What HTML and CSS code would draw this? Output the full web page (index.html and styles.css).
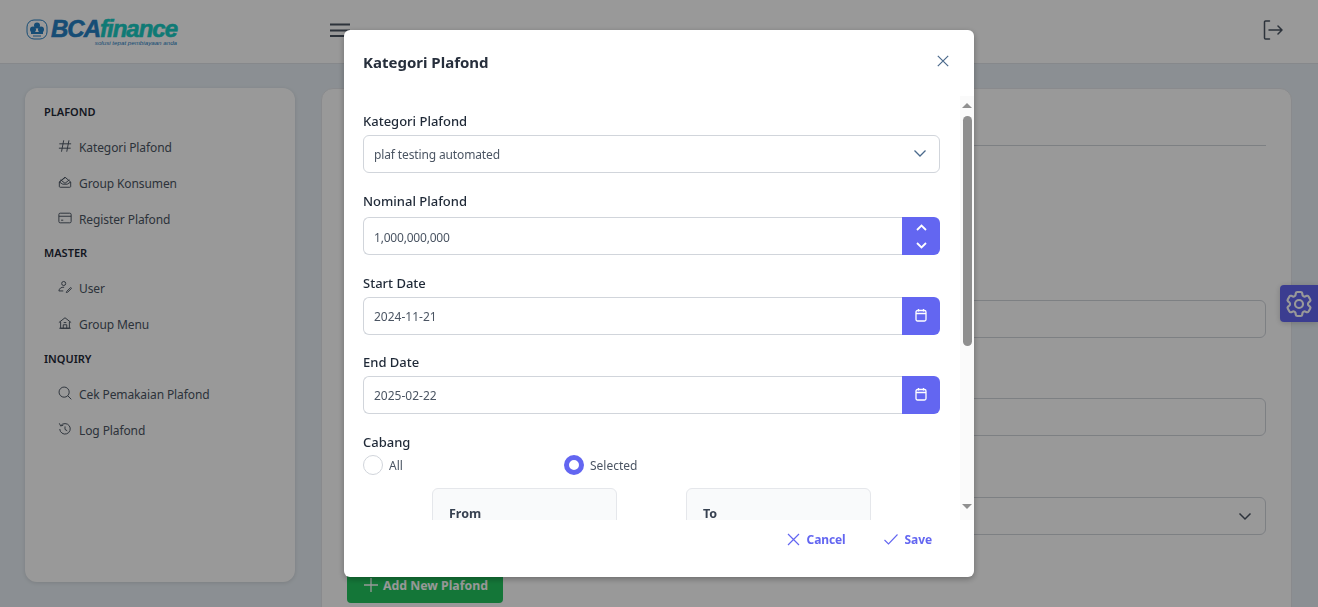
FILE: index.html
```html
<!DOCTYPE html>
<html>
<head>
    <title>Kategori Plafond</title>
    <link rel="stylesheet" href="styles.css">
</head>
<body>
    <!-- Page behind the dialog -->
    <header class="topbar">
        <div class="logo">
            <svg class="logo-mark" width="22" height="21" viewBox="0 0 22 21">
                <rect x="1" y="1" width="20" height="19" rx="7" fill="none" stroke="#2680c4" stroke-width="1"/>
                <circle cx="11" cy="6.5" r="3" fill="#2680c4"/>
                <circle cx="7" cy="10.5" r="3" fill="#2680c4"/>
                <circle cx="15" cy="10.5" r="3" fill="#2680c4"/>
                <path d="M5 13h12v2H5z" fill="#2680c4"/>
                <path d="M7 17h8" stroke="#2680c4"/>
            </svg>
            <div class="logo-words">
                <div class="logo-name"><span class="logo-bca">BCA</span><span class="logo-finance">finance</span></div>
                <div class="logo-tag">solusi tepat pembiayaan anda</div>
            </div>
        </div>
        <button class="icon-btn menu-btn">
            <svg width="20" height="17" viewBox="0 0 20 17" fill="none" stroke="#4b5563" stroke-width="2"><path d="M0 2.500h20M0 8.500h20M0 14h20"/></svg>
        </button>
        <button class="icon-btn logout-btn">
            <svg width="22" height="22" viewBox="0 0 22 22" fill="none" stroke="#4b5563" stroke-width="1.5" stroke-linecap="round" stroke-linejoin="round"><path d="M7.5 2H3.5a1 1 0 0 0-1 1v16a1 1 0 0 0 1 1h4M7 11h13M16 7l4 4-4 4"/></svg>
        </button>
    </header>

    <div class="page">
        <aside class="sidebar">
            <h4 class="side-title">PLAFOND</h4>
            <a class="side-link">
                <svg viewBox="0 0 16 16"><path d="M6.5 1.5 4 14.5M12.5 1.5 10 14.5M1.5 5.5h13.5M1 10.5h13.5"/></svg>
                Kategori Plafond
            </a>
            <a class="side-link">
                <svg viewBox="0 0 16 16"><path d="M1.500 8v5a1 1 0 0 0 1 1h11a1 1 0 0 0 1-1V8L8 2.500zM1.500 8 8 3M1.500 8l4 2.500h5l4-2.500M3 5.500 8 9.500l5-4"/></svg>
                Group Konsumen
            </a>
            <a class="side-link">
                <svg viewBox="0 0 16 16"><rect x="1" y="2.500" width="14" height="11" rx="1.500"/><path d="M1 6h14M3.500 10.500h2.500"/></svg>
                Register Plafond
            </a>
            <h4 class="side-title master">MASTER</h4>
            <a class="side-link">
                <svg viewBox="0 0 16 16"><circle cx="6.500" cy="4" r="2.300"/><path d="M1 12.500c.5-3 2.500-4.500 6-4.200M1 12.500h5M10 13l4.500-4.500 1 1L11 14l-1.500.3z"/></svg>
                User
            </a>
            <a class="side-link">
                <svg viewBox="0 0 16 16"><path d="M1 7.500 8 2l7 5.500M3 6.500v7.500h10V6.500M1.500 14h13M6 14v-4h4v4"/><path d="M6.500 7.500h3"/></svg>
                Group Menu
            </a>
            <h4 class="side-title inquiry">INQUIRY</h4>
            <a class="side-link">
                <svg viewBox="0 0 16 16"><circle cx="7" cy="7" r="5.800"/><path d="m11.200 11.200 4 4"/></svg>
                Cek Pemakaian Plafond
            </a>
            <a class="side-link">
                <svg viewBox="0 0 16 16"><path d="M3.200 4.200A6 6 0 1 1 2 8M1.500 1.500l1.500 3 3-.8M8 5v3.500l2.500 1.500"/></svg>
                Log Plafond
            </a>
        </aside>

        <main class="content">
            <div class="content-head"></div>
            <div class="back-input first"></div>
            <div class="back-input second"></div>
            <div class="back-input third">
                <svg width="14" height="14" viewBox="0 0 14 14" fill="none" stroke="#4b5563" stroke-width="1.500"><path d="m1.500 4.500 5.500 5.500 5.500-5.500"/></svg>
            </div>
            <button class="add-btn">
                <svg width="14" height="14" viewBox="0 0 14 14" fill="none" stroke="#fff" stroke-width="1.300"><path d="M7 0v14M0 7h14"/></svg>
                Add New Plafond
            </button>
        </main>
    </div>

    <button class="settings-tab">
        <svg width="32" height="32" viewBox="0 0 24 24" fill="none" stroke="#fff" stroke-width="1.600" stroke-linecap="round" stroke-linejoin="round"><path d="M9.594 3.940c.09-.542.56-.94 1.110-.94h2.593c.55 0 1.020.398 1.110.94l.213 1.281c.063.374.313.686.645.870.074.040.147.083.220.127.325.196.72.257 1.075.124l1.217-.456a1.125 1.125 0 0 1 1.370.490l1.296 2.247a1.125 1.125 0 0 1-.26 1.431l-1.003.827c-.293.241-.438.613-.43.992a7.723 7.723 0 0 1 0 .255c-.008.378.137.75.43.991l1.004.827c.424.35.534.955.26 1.430l-1.298 2.247a1.125 1.125 0 0 1-1.369.491l-1.217-.456c-.355-.133-.75-.072-1.076.124a6.470 6.470 0 0 1-.22.128c-.331.183-.581.495-.644.869l-.213 1.281c-.09.543-.56.94-1.110.94h-2.594c-.55 0-1.019-.398-1.110-.94l-.213-1.281c-.062-.374-.312-.686-.644-.87a6.520 6.520 0 0 1-.22-.127c-.325-.196-.72-.257-1.076-.124l-1.217.456a1.125 1.125 0 0 1-1.369-.49l-1.297-2.247a1.125 1.125 0 0 1 .26-1.431l1.004-.827c.292-.24.437-.613.43-.991a6.932 6.932 0 0 1 0-.255c.007-.38-.138-.751-.43-.992l-1.004-.827a1.125 1.125 0 0 1-.26-1.430l1.297-2.247a1.125 1.125 0 0 1 1.370-.491l1.216.456c.356.133.751.072 1.076-.124.072-.044.146-.086.22-.128.332-.183.582-.495.644-.869l.214-1.280Z"/><circle cx="12" cy="12" r="3"/></svg>
    </button>

    <!-- Dialog -->
    <div class="overlay">
        <div class="modal">
            <div class="modal-head">
                <h3 class="modal-title">Kategori Plafond</h3>
                <button class="icon-btn close-btn">
                    <svg width="12" height="12" viewBox="0 0 12 12" fill="none" stroke="#4b6a8c" stroke-width="1.200"><path d="m.8.800 10.400 10.400M11.200.800.800 11.200"/></svg>
                </button>
            </div>

            <div class="modal-body">
                <form class="modal-form">
                    <div class="field">
                        <label>Kategori Plafond</label>
                        <div class="select-box">
                            plaf testing automated
                            <svg class="caret" width="14" height="14" viewBox="0 0 14 14" fill="none" stroke="#4b6a8c" stroke-width="1.300"><path d="m1.500 4.500 5.500 5.500 5.500-5.500"/></svg>
                        </div>
                    </div>
                    <div class="field nominal">
                        <label>Nominal Plafond</label>
                        <div class="input-group">
                            <div class="input-box">1,000,000,000</div>
                            <div class="addon spinner">
                                <svg width="11" height="7" viewBox="0 0 11 7" fill="none" stroke="#fff" stroke-width="1.800"><path d="m1 6 4.500-4.500L10 6"/></svg>
                                <svg width="11" height="7" viewBox="0 0 11 7" fill="none" stroke="#fff" stroke-width="1.800"><path d="m1 1 4.500 4.500L10 1"/></svg>
                            </div>
                        </div>
                    </div>
                    <div class="field start">
                        <label>Start Date</label>
                        <div class="input-group">
                            <div class="input-box">2024-11-21</div>
                            <div class="addon">
                                <svg class="cal" width="12" height="14" viewBox="0 0 12 14" fill="none" stroke="#fff" stroke-width="1.300"><rect x="1" y="2.500" width="10" height="10.500" rx="1.500"/><path d="M1 5.500h10M3.500 1v2.500M8.500 1v2.500"/></svg>
                            </div>
                        </div>
                    </div>
                    <div class="field end">
                        <label>End Date</label>
                        <div class="input-group">
                            <div class="input-box">2025-02-22</div>
                            <div class="addon">
                                <svg class="cal" width="12" height="14" viewBox="0 0 12 14" fill="none" stroke="#fff" stroke-width="1.300"><rect x="1" y="2.500" width="10" height="10.500" rx="1.500"/><path d="M1 5.500h10M3.500 1v2.500M8.500 1v2.500"/></svg>
                            </div>
                        </div>
                    </div>
                    <div class="field cabang">
                        <label>Cabang</label>
                        <div class="radio-row">
                            <div class="radio-item"><span class="radio"></span>All</div>
                            <div class="radio-item"><span class="radio checked"></span>Selected</div>
                        </div>
                    </div>
                    <div class="pick-lists">
                        <div class="pick-list">From</div>
                        <div class="pick-list">To</div>
                    </div>
                </form>
                <div class="scrollbar">
                    <span class="arrow-up"></span>
                    <span class="thumb"></span>
                    <span class="arrow-down"></span>
                </div>
            </div>

            <div class="modal-foot">
                <button class="text-btn">
                    <svg width="13" height="13" viewBox="0 0 13 13" fill="none" stroke="#6366f1" stroke-width="1.200"><path d="m1 1 11 11M12 1 1 12"/></svg>
                    Cancel
                </button>
                <button class="text-btn">
                    <svg width="14" height="11" viewBox="0 0 14 11" fill="none" stroke="#6366f1" stroke-width="1.100"><path d="m.5 6 4 4 9-9.500"/></svg>
                    Save
                </button>
            </div>
        </div>
    </div>
</body>
</html>
```

FILE: styles.css
```css
* {
    box-sizing: border-box;
}

html, body {
    height: 100%;
}

body {
    margin: 0;
    overflow: hidden;
    background-color: #e8eff5;
    font-family: "Noto Sans", Arial, sans-serif;
    font-size: 13px;
    color: #4b5563;
}

button {
    font-family: inherit;
    border: none;
    background: none;
    padding: 0;
}

.icon-btn {
    display: flex;
}

/* Top bar */
.topbar {
    display: flex;
    align-items: center;
    height: 64px;
    padding: 0 34px 0 26px;
    background-color: #fff;
    border-bottom: 1px solid #dfe3e8;
}

.logo {
    display: flex;
    align-items: flex-start;
    gap: 3px;
    width: 304px;
    margin-top: 2px;
}

.logo-name {
    font-family: "Liberation Sans", Arial, sans-serif;
    font-size: 24px;
    line-height: 20px;
    font-weight: 700;
    font-style: italic;
    letter-spacing: -1px;
    -webkit-text-stroke: .6px;
}

.logo-bca {
    color: #2680c4;
}

.logo-finance {
    color: #19ccc4;
}

.logo-tag {
    text-align: right;
    font-family: "Liberation Sans", Arial, sans-serif;
    font-size: 6.200px;
    line-height: 7px;
    font-style: italic;
    color: #2680c4;
}

.menu-btn {
    margin-bottom: 3px;
}

.logout-btn {
    margin-left: auto;
    margin-bottom: 3px;
}

/* Page behind the dialog */
.page {
    display: flex;
    align-items: flex-start;
    gap: 26px;
    height: 543px;
    overflow: hidden;
    padding: 24px 26px 0 25px;
}

.sidebar {
    flex: none;
    width: 270px;
    height: 494px;
    padding: 16px 19px;
    background-color: #fff;
    border-radius: 12px;
    box-shadow: 0 1px 4px rgba(0, 0, 0, .12);
}

.side-title {
    margin: 0;
    font-size: 11px;
    line-height: 16px;
    font-weight: 600;
    color: #1f2937;
}

.side-title.master {
    margin-top: 8px;
}

.side-title.inquiry {
    margin-top: 9px;
}

.side-link {
    display: flex;
    align-items: center;
    gap: 7px;
    height: 36px;
    padding-left: 14px;
    font-size: 12px;
    letter-spacing: -.1px;
    color: #4b5563;
}

.side-title + .side-link {
    margin-top: 9px;
}

.side-link svg {
    flex: none;
    width: 14px;
    height: 14px;
    margin-top: -3px;
    fill: none;
    stroke: #4b5563;
    stroke-width: 1.100;
}

.content {
    flex: 1;
    height: 600px;
    padding: 0 25px;
    background-color: #fff;
    border: 1px solid #e5e7eb;
    border-radius: 12px;
}

.content-head {
    height: 57px;
    border-bottom: 1px solid #d1d5db;
}

.back-input {
    display: flex;
    align-items: center;
    justify-content: flex-end;
    height: 38px;
    padding-right: 13px;
    border: 1px solid #d1d5db;
    border-radius: 6px;
}

.back-input.first {
    margin-top: 154px;
}

.back-input.second {
    margin-top: 60px;
}

.back-input.third {
    margin-top: 61px;
}

.add-btn {
    display: flex;
    align-items: center;
    gap: 5px;
    width: 156px;
    height: 34px;
    margin-top: 34px;
    padding: 0 0 2px 17px;
    background-color: #22c55e;
    border-radius: 4px;
    font-size: 12.300px;
    font-weight: 700;
    color: #fff;
}

.settings-tab {
    position: fixed;
    top: 285px;
    right: 0;
    display: flex;
    align-items: center;
    justify-content: center;
    width: 38px;
    height: 37px;
    background-color: #6366f1;
    border-radius: 4px 0 0 4px;
    box-shadow: 0 1px 6px rgba(0, 0, 0, .2);
}

/* Dialog */
.overlay {
    position: fixed;
    inset: 0;
    background-color: rgba(0, 0, 0, .4);
}

.modal {
    display: flex;
    flex-direction: column;
    width: 630px;
    height: 547px;
    margin: 30px 0 0 344px;
    background-color: #fff;
    border-radius: 6px;
    box-shadow: 0 2px 6px rgba(0, 0, 0, .3);
}

.modal-head {
    display: flex;
    align-items: center;
    justify-content: space-between;
    height: 66px;
    padding: 0 25px 3px 19px;
}

.close-btn {
    margin-bottom: 2px;
}

.modal-title {
    margin: 0;
    font-size: 15px;
    font-weight: 700;
    color: #272f3c;
}

.modal-body {
    flex: none;
    display: flex;
    height: 424px;
}

.modal-form {
    flex: 1;
    overflow: hidden;
    padding: 15px 20px 0 19px;
}

label {
    display: block;
    height: 24px;
    font-size: 13px;
    line-height: 20px;
    font-weight: 500;
    color: #1f2937;
}

.select-box, .input-box {
    display: flex;
    align-items: center;
    height: 38px;
    padding: 0 10px;
    background-color: #fff;
    border: 1px solid #d1d5db;
    font-size: 12px;
    color: #4b5563;
}

.select-box {
    justify-content: space-between;
    padding-right: 12px;
    border-radius: 6px;
    letter-spacing: -.13px;
}

.caret {
    margin-bottom: 3px;
}

.field.nominal {
    margin-top: 18px;
}

.nominal label {
    height: 26px;
}

.nominal .input-box {
    padding-top: 2px;
    letter-spacing: -.2px;
}

.field.start {
    margin-top: 18px;
}

.field.end {
    margin-top: 17px;
}

.field.cabang {
    margin-top: 18px;
}

.cabang label {
    height: 23px;
}

.input-group {
    display: flex;
}

.input-box {
    flex: 1;
    border-right: none;
    border-radius: 6px 0 0 6px;
}

.addon {
    flex: none;
    display: flex;
    flex-direction: column;
    align-items: center;
    justify-content: center;
    width: 38px;
    height: 38px;
    background-color: #6366f1;
    border-radius: 0 6px 6px 0;
}

.addon.spinner {
    gap: 11px;
}

.cal {
    margin-bottom: 2px;
}

.radio-row {
    display: flex;
}

.radio-item {
    display: flex;
    align-items: center;
    gap: 6px;
    width: 201px;
    height: 20px;
    font-size: 12px;
}

.radio {
    width: 20px;
    height: 20px;
    background-color: #fff;
    border: 1px solid #d1d5db;
    border-radius: 50%;
}

.radio.checked {
    border: 5px solid #6366f1;
}

.pick-lists {
    display: flex;
    gap: 69px;
    margin: 13px 0 0 69px;
}

.pick-list {
    width: 185px;
    height: 120px;
    padding: 16px;
    background-color: #f9fafb;
    border: 1px solid #e5e7eb;
    border-radius: 6px;
    font-size: 12.500px;
    font-weight: 700;
    color: #374151;
}

.scrollbar {
    flex: none;
    display: flex;
    flex-direction: column;
    align-items: center;
    width: 14px;
    padding-top: 7px;
    background-color: #fafafa;
}

.arrow-up, .arrow-down {
    width: 0;
    height: 0;
    border-left: 5px solid transparent;
    border-right: 5px solid transparent;
}

.arrow-up {
    border-bottom: 5px solid #8f8f8f;
}

.arrow-down {
    margin-top: 158px;
    border-top: 5px solid #8f8f8f;
}

.thumb {
    width: 9px;
    height: 230px;
    margin-top: 8px;
    background-color: #8f8f8f;
    border-radius: 5px;
}

.modal-foot {
    display: flex;
    justify-content: flex-end;
    gap: 38px;
    padding: 12px 42px 0 0;
}

.text-btn {
    display: flex;
    align-items: center;
    gap: 7px;
    height: 14px;
    font-size: 12px;
    letter-spacing: -.1px;
    font-weight: 700;
    color: #6366f1;
}
```
